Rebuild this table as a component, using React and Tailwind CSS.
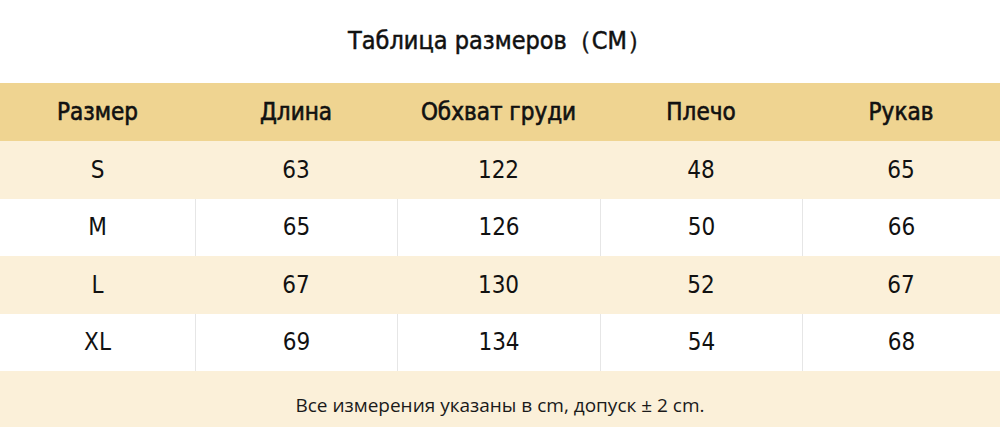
export default function App() {
  const cols = ["Размер", "Длина", "Обхват груди", "Плечо", "Рукав"];
  const rows = [
    ["S", "63", "122", "48", "65"],
    ["M", "65", "126", "50", "66"],
    ["L", "67", "130", "52", "67"],
    ["XL", "69", "134", "54", "68"],
  ];
  const grid = "grid grid-cols-[195px_202px_203px_202px_198px]";
  const cond = { fontFamily: "'DejaVu Sans Condensed', 'DejaVu Sans', sans-serif" };

  return (
    <div className="w-[1000px] h-[427px] bg-white overflow-hidden flex flex-col text-[#111]">
      <div className="h-[83px] flex items-center justify-center">
        <h1 className="text-[25px] [-webkit-text-stroke:0.5px_#111] pb-[1px]" style={cond}>
          Таблица размеров（CM）
        </h1>
      </div>

      <div className={`${grid} h-[58px] bg-[#efd491] items-center`}>
        {cols.map((c) => (
          <div key={c} className="text-center text-[24px] [-webkit-text-stroke:0.6px_#111]" style={cond}>
            {c}
          </div>
        ))}
      </div>

      {rows.map((r, i) => (
        <div
          key={r[0]}
          className={`${grid} h-[57.5px] ${i % 2 === 0 ? "bg-[#fbf0d9]" : "bg-white"}`}
        >
          {r.map((v, j) => (
            <div
              key={j}
              className={`flex items-center justify-center text-[24px] ${
                i % 2 === 1 && j > 0 ? "border-l border-[#e6e6e6]" : ""
              }`}
              style={cond}
            >
              {v}
            </div>
          ))}
        </div>
      ))}

      <div className="flex-1 bg-[#fbf0d9] flex items-end justify-center pb-[8px]">
        <p className="text-[19px] text-[#1a1a1a]" style={{ fontFamily: "'Open Sans', sans-serif" }}>
          Все измерения указаны в cm, допуск ± 2 cm.
        </p>
      </div>
    </div>
  );
}
